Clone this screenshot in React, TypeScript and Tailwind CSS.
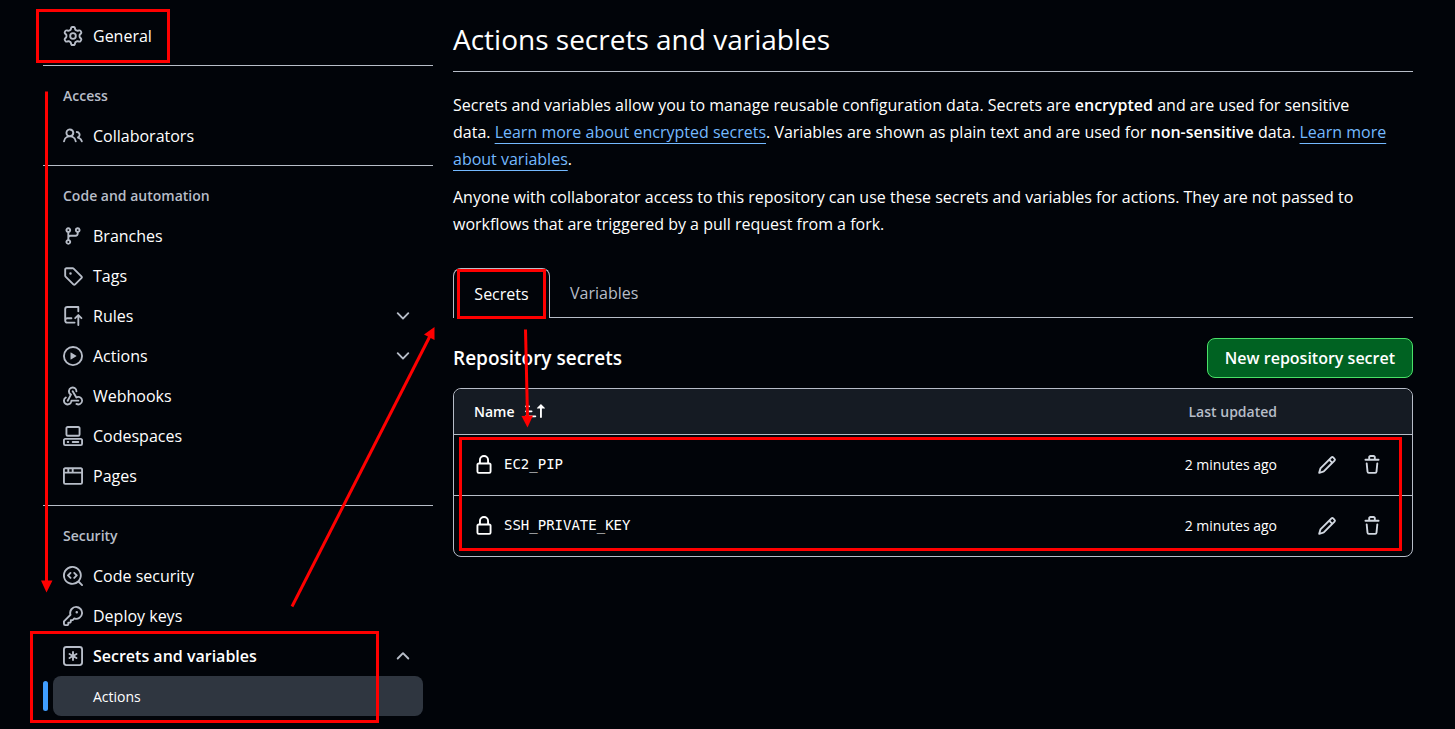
import type { ReactNode } from "react";

/* ----------------------------------------------------------------- Icons */

const ICONS = {
  gear: "M8 0a8.2 8.2 0 0 1 .701.031C9.444.095 9.99.645 10.16 1.29l.288 1.107c.018.066.079.158.212.224.231.114.454.243.668.386.123.082.233.09.299.071l1.103-.303c.644-.176 1.392.021 1.82.63.27.385.506.792.704 1.218.315.675.111 1.422-.364 1.891l-.814.806c-.049.048-.098.147-.088.294.016.257.016.515 0 .772-.01.147.038.246.088.294l.814.806c.475.469.679 1.216.364 1.891a7.977 7.977 0 0 1-.704 1.217c-.428.61-1.176.807-1.82.63l-1.102-.302c-.067-.019-.177-.011-.3.071a5.909 5.909 0 0 1-.668.386c-.133.066-.194.158-.211.224l-.29 1.106c-.168.646-.715 1.196-1.458 1.26a8.006 8.006 0 0 1-1.402 0c-.743-.064-1.289-.614-1.458-1.26l-.289-1.106c-.018-.066-.079-.158-.212-.224a5.738 5.738 0 0 1-.668-.386c-.123-.082-.233-.09-.299-.071l-1.103.303c-.644.176-1.392-.021-1.82-.63a8.12 8.12 0 0 1-.704-1.218c-.315-.675-.111-1.422.363-1.891l.815-.806c.05-.048.098-.147.088-.294a6.214 6.214 0 0 1 0-.772c.01-.147-.038-.246-.088-.294l-.815-.806C.635 6.045.431 5.298.746 4.623a7.92 7.92 0 0 1 .704-1.217c.428-.61 1.176-.807 1.82-.63l1.102.302c.067.019.177.011.3-.071.214-.143.437-.272.668-.386.133-.066.194-.158.211-.224l.29-1.106C6.009.645 6.556.095 7.299.03 7.53.01 7.764 0 8 0Zm-.571 1.525c-.036.003-.108.036-.137.146l-.289 1.105c-.147.561-.549.967-.998 1.189-.173.086-.34.183-.5.29-.417.278-.97.423-1.529.27l-1.103-.303c-.109-.03-.175.016-.195.045-.22.312-.412.644-.573.99-.014.031-.021.11.059.19l.815.806c.411.406.562.957.53 1.456a4.709 4.709 0 0 0 0 .582c.032.499-.119 1.05-.53 1.456l-.815.806c-.081.08-.073.159-.059.19.162.346.353.677.573.989.02.03.085.076.195.046l1.102-.303c.56-.153 1.113-.008 1.53.27.161.107.328.204.501.29.447.222.85.629.997 1.189l.289 1.105c.029.109.101.143.137.146a6.6 6.6 0 0 0 1.142 0c.036-.003.108-.036.137-.146l.289-1.105c.147-.561.549-.967.998-1.189.173-.086.34-.183.5-.29.417-.278.97-.423 1.529-.27l1.103.303c.109.029.175-.016.195-.045.22-.313.411-.644.573-.99.014-.031.021-.11-.059-.19l-.815-.806c-.411-.406-.562-.957-.53-1.456a4.709 4.709 0 0 0 0-.582c-.032-.499.119-1.05.53-1.456l.815-.806c.081-.08.073-.159.059-.19a6.464 6.464 0 0 0-.573-.989c-.02-.03-.085-.076-.195-.046l-1.102.303c-.56.153-1.113.008-1.53-.27a4.44 4.44 0 0 0-.501-.29c-.447-.222-.85-.629-.997-1.189l-.289-1.105c-.029-.11-.101-.143-.137-.146a6.6 6.6 0 0 0-1.142 0ZM11 8a3 3 0 1 1-6 0 3 3 0 0 1 6 0ZM9.5 8a1.5 1.5 0 1 0-3.001.001A1.5 1.5 0 0 0 9.5 8Z",
  people:
    "M2 5.5a3.5 3.5 0 1 1 5.898 2.549 5.508 5.508 0 0 1 3.034 4.084.75.75 0 1 1-1.482.235 4 4 0 0 0-7.9 0 .75.75 0 0 1-1.482-.236A5.507 5.507 0 0 1 3.102 8.05 3.493 3.493 0 0 1 2 5.5ZM11 4a3.001 3.001 0 0 1 2.22 5.018 5.01 5.01 0 0 1 2.56 3.012.749.749 0 0 1-.885.954.752.752 0 0 1-.549-.514 3.507 3.507 0 0 0-2.522-2.372.75.75 0 0 1-.574-.73v-.352a.75.75 0 0 1 .416-.672A1.5 1.5 0 0 0 11 5.5.75.75 0 0 1 11 4Zm-5.5-.5a2 2 0 1 0-.001 3.999A2 2 0 0 0 5.5 3.5Z",
  branch:
    "M9.5 3.25a2.25 2.25 0 1 1 3 2.122V6A2.5 2.5 0 0 1 10 8.5H6a1 1 0 0 0-1 1v1.128a2.251 2.251 0 1 1-1.5 0V5.372a2.25 2.25 0 1 1 1.5 0v1.836A2.493 2.493 0 0 1 6 7h4a1 1 0 0 0 1-1v-.628A2.25 2.25 0 0 1 9.5 3.25Zm-6 0a.75.75 0 1 0 1.5 0 .75.75 0 0 0-1.5 0Zm8.25-.75a.75.75 0 1 0 0 1.5.75.75 0 0 0 0-1.5ZM4.25 12a.75.75 0 1 0 0 1.5.75.75 0 0 0 0-1.5Z",
  tag: "M1 7.775V2.75C1 1.784 1.784 1 2.75 1h5.025c.464 0 .91.184 1.238.513l6.25 6.25a1.75 1.75 0 0 1 0 2.474l-5.026 5.026a1.75 1.75 0 0 1-2.474 0l-6.25-6.25A1.752 1.752 0 0 1 1 7.775Zm1.5 0c0 .066.026.13.073.177l6.25 6.25a.25.25 0 0 0 .354 0l5.025-5.025a.25.25 0 0 0 0-.354l-6.25-6.25a.25.25 0 0 0-.177-.073H2.75a.25.25 0 0 0-.25.25ZM6 5a1 1 0 1 1 0 2 1 1 0 0 1 0-2Z",
  repoPush:
    "M1 2.5A2.5 2.5 0 0 1 3.5 0h8.75a.75.75 0 0 1 .75.75v3.5a.75.75 0 0 1-1.5 0V1.5h-8a1 1 0 0 0-1 1v6.708A2.493 2.493 0 0 1 3.5 9h3.25a.75.75 0 0 1 0 1.5H3.5a1 1 0 0 0 0 2h5.75a.75.75 0 0 1 0 1.5H3.5A2.5 2.5 0 0 1 1 11.5Zm13.23 7.79-.001-.001-1.224-1.224v6.184a.75.75 0 0 1-1.5 0V9.066L10.28 10.29a.75.75 0 0 1-1.06-1.061l2.505-2.504a.75.75 0 0 1 1.06 0L15.29 9.23a.751.751 0 0 1-.018 1.042.751.751 0 0 1-1.042.018Z",
  play: "M8 0a8 8 0 1 1 0 16A8 8 0 0 1 8 0ZM1.5 8a6.5 6.5 0 1 0 13 0 6.5 6.5 0 0 0-13 0Zm4.879-2.773 4.264 2.559a.25.25 0 0 1 0 .428l-4.264 2.559A.25.25 0 0 1 6 10.559V5.442a.25.25 0 0 1 .379-.215Z",
  webhook:
    "M5.5 4.25a2.25 2.25 0 0 1 4.5 0 .75.75 0 0 0 1.5 0 3.75 3.75 0 1 0-6.14 2.889l-2.272 4.258a.75.75 0 0 0 1.324.706L7 7.25a.75.75 0 0 0-.309-1.015A2.25 2.25 0 0 1 5.5 4.25ZM7.364 3.607a.75.75 0 0 1 1.03.257l2.608 4.349a3.75 3.75 0 1 1-.628 6.785.75.75 0 0 1 .752-1.299 2.25 2.25 0 1 0-.033-3.88.75.75 0 0 1-1.03-.256L7.107 4.636a.75.75 0 0 1 .257-1.03ZM2.9 8.776A.75.75 0 0 1 2.625 9.8 2.25 2.25 0 1 0 6 11.75a.75.75 0 0 1 .75-.751h5.5a.75.75 0 0 1 0 1.5H7.425a3.751 3.751 0 1 1-5.55-3.998.75.75 0 0 1 1.024.274Z",
  codespaces:
    "M0 11.25c0-.966.784-1.75 1.75-1.75h12.5c.966 0 1.75.784 1.75 1.75v3A1.75 1.75 0 0 1 14.25 16H1.75A1.75 1.75 0 0 1 0 14.25Zm2-9.5C2 .784 2.784 0 3.75 0h8.5C13.216 0 14 .784 14 1.75v5a1.75 1.75 0 0 1-1.75 1.75h-8.5A1.75 1.75 0 0 1 2 6.75Zm1.75-.25a.25.25 0 0 0-.25.25v5c0 .138.112.25.25.25h8.5a.25.25 0 0 0 .25-.25v-5a.25.25 0 0 0-.25-.25Zm-2 9.5a.25.25 0 0 0-.25.25v3c0 .138.112.25.25.25h12.5a.25.25 0 0 0 .25-.25v-3a.25.25 0 0 0-.25-.25ZM7 12.75a.75.75 0 0 1 .75-.75h4.5a.75.75 0 0 1 0 1.5h-4.5a.75.75 0 0 1-.75-.75Zm-4 0a.75.75 0 0 1 .75-.75h.5a.75.75 0 0 1 0 1.5h-.5a.75.75 0 0 1-.75-.75Z",
  browser:
    "M0 2.75C0 1.784.784 1 1.75 1h12.5c.966 0 1.75.784 1.75 1.75v10.5A1.75 1.75 0 0 1 14.25 15H1.75A1.75 1.75 0 0 1 0 13.25ZM14.5 6h-13v7.25c0 .138.112.25.25.25h12.5a.25.25 0 0 0 .25-.25Zm-6-3.5v2h6V2.75a.25.25 0 0 0-.25-.25ZM5 2.5v2h2v-2Zm-3.25 0a.25.25 0 0 0-.25.25V4.5h2v-2Z",
  codescan:
    "M8.47 4.97a.75.75 0 0 0 0 1.06L9.94 7.5 8.47 8.97a.75.75 0 1 0 1.06 1.06l2-2a.75.75 0 0 0 0-1.06l-2-2a.75.75 0 0 0-1.06 0ZM6.53 6.03a.75.75 0 0 0-1.06-1.06l-2 2a.75.75 0 0 0 0 1.06l2 2a.75.75 0 1 0 1.06-1.06L5.06 7.5l1.47-1.47ZM12.246 13.307a7.501 7.501 0 1 1 1.06-1.06l2.474 2.473a.749.749 0 0 1-.326 1.275.749.749 0 0 1-.734-.215ZM1.5 7.5a6.002 6.002 0 0 0 3.608 5.504 6.002 6.002 0 0 0 6.486-1.117.748.748 0 0 1 .292-.293A6 6 0 1 0 1.5 7.5Z",
  key: "M10.5 0a5.499 5.499 0 1 1-1.288 10.848l-.932.932a.749.749 0 0 1-.53.22H7v.75a.749.749 0 0 1-.22.53l-.5.5a.749.749 0 0 1-.53.22H5v.75a.749.749 0 0 1-.22.53l-.5.5a.749.749 0 0 1-.53.22h-2A1.75 1.75 0 0 1 0 14.25v-2c0-.199.079-.389.22-.53l4.932-4.932A5.5 5.5 0 0 1 10.5 0Zm-4 5.5c-.001.431.069.86.205 1.269a.75.75 0 0 1-.181.768L1.5 12.56v1.69c0 .138.112.25.25.25h1.69l.06-.06v-1.19a.75.75 0 0 1 .75-.75h1.19l.06-.06v-1.19a.75.75 0 0 1 .75-.75h1.19l1.023-1.025a.75.75 0 0 1 .768-.18A4 4 0 1 0 6.5 5.5ZM11 6a1 1 0 1 1 0-2 1 1 0 0 1 0 2Z",
  asterisk:
    "M0 2.75A2.75 2.75 0 0 1 2.75 0h10.5A2.75 2.75 0 0 1 16 2.75v10.5A2.75 2.75 0 0 1 13.25 16H2.75A2.75 2.75 0 0 1 0 13.25ZM2.75 1.5c-.69 0-1.25.56-1.25 1.25v10.5c0 .69.56 1.25 1.25 1.25h10.5c.69 0 1.25-.56 1.25-1.25V2.75c0-.69-.56-1.25-1.25-1.25ZM8 4a.75.75 0 0 1 .75.75V6.7l1.69-.975a.75.75 0 0 1 .75 1.3L9.5 8l1.69.976a.75.75 0 0 1-.75 1.298L8.75 9.3v1.951a.75.75 0 0 1-1.5 0V9.299l-1.69.976a.75.75 0 0 1-.75-1.3L6.5 8l-1.69-.975a.75.75 0 0 1 .75-1.3l1.69.976V4.75A.75.75 0 0 1 8 4Z",
  chevronDown:
    "M12.78 5.22a.749.749 0 0 1 0 1.06l-4.25 4.25a.749.749 0 0 1-1.06 0L3.22 6.28a.749.749 0 1 1 1.06-1.06L8 8.939l3.72-3.719a.749.749 0 0 1 1.06 0Z",
  chevronUp:
    "M3.22 10.53a.749.749 0 0 1 0-1.06l4.25-4.25a.749.749 0 0 1 1.06 0l4.25 4.25a.749.749 0 1 1-1.06 1.06L8 6.811 4.28 10.53a.749.749 0 0 1-1.06 0Z",
  sortAsc:
    "m12.927 2.573 3 3A.25.25 0 0 1 15.75 6H13.5v6.75a.75.75 0 0 1-1.5 0V6H9.75a.25.25 0 0 1-.177-.427l3-3a.25.25 0 0 1 .354 0ZM0 12.25a.75.75 0 0 1 .75-.75h7.5a.75.75 0 0 1 0 1.5H.75a.75.75 0 0 1-.75-.75Zm0-4a.75.75 0 0 1 .75-.75h4.5a.75.75 0 0 1 0 1.5H.75a.75.75 0 0 1-.75-.75Zm0-4a.75.75 0 0 1 .75-.75h2.5a.75.75 0 0 1 0 1.5H.75a.75.75 0 0 1-.75-.75Z",
  lock: "M4 4a4 4 0 0 1 8 0v2h.25c.966 0 1.75.784 1.75 1.75v5.5A1.75 1.75 0 0 1 12.25 15h-8.5A1.75 1.75 0 0 1 2 13.25v-5.5C2 6.784 2.784 6 3.75 6H4Zm8.25 3.5h-8.5a.25.25 0 0 0-.25.25v5.5c0 .138.112.25.25.25h8.5a.25.25 0 0 0 .25-.25v-5.5a.25.25 0 0 0-.25-.25ZM10.5 6V4a2.5 2.5 0 1 0-5 0v2Z",
  pencil:
    "M11.013 1.427a1.75 1.75 0 0 1 2.474 0l1.086 1.086a1.75 1.75 0 0 1 0 2.474l-8.61 8.61c-.21.21-.47.364-.756.445l-3.251.93a.75.75 0 0 1-.927-.928l.929-3.25c.081-.286.235-.547.445-.758l8.61-8.61Zm.176 4.823L9.75 4.81l-6.286 6.287a.253.253 0 0 0-.064.108l-.558 1.953 1.953-.558a.253.253 0 0 0 .108-.064Zm1.238-3.763a.25.25 0 0 0-.354 0L10.811 3.75l1.439 1.44 1.263-1.263a.25.25 0 0 0 0-.354Z",
  trash:
    "M11 1.75V3h2.25a.75.75 0 0 1 0 1.5H2.75a.75.75 0 0 1 0-1.5H5V1.75C5 .784 5.784 0 6.75 0h2.5C10.216 0 11 .784 11 1.75ZM4.496 6.675l.66 6.6a.25.25 0 0 0 .249.225h5.19a.25.25 0 0 0 .249-.225l.66-6.6a.75.75 0 0 1 1.492.149l-.66 6.6A1.748 1.748 0 0 1 10.595 15h-5.19a1.75 1.75 0 0 1-1.741-1.575l-.66-6.6a.75.75 0 1 1 1.492-.15ZM6.5 1.75V3h3V1.75a.25.25 0 0 0-.25-.25h-2.5a.25.25 0 0 0-.25.25Z",
};

type IconName = keyof typeof ICONS;

function Icon({ name, className = "" }: { name: IconName; className?: string }) {
  return (
    <svg
      viewBox="0 0 16 16"
      fill="currentColor"
      aria-hidden="true"
      className={`h-5 w-5 flex-none ${className}`}
    >
      <path d={ICONS[name]} />
    </svg>
  );
}

/* ----------------------------------------------------------- Annotations */

function Highlight({ className }: { className: string }) {
  return (
    <span
      className={`pointer-events-none absolute z-10 border-3 border-[#ff0000] ${className}`}
    />
  );
}

function Arrows() {
  return (
    <svg
      width="600"
      height="640"
      viewBox="0 0 600 640"
      aria-hidden="true"
      className="pointer-events-none absolute left-0 top-0 z-10"
    >
      <g fill="#ff0000" stroke="#ff0000">
        <path d="M46.5 91.5V582" strokeWidth="3" />
        <path d="M41 580.5h11.5L46.5 592.5Z" stroke="none" />
        <path d="M292 606.5 430 336" strokeWidth="3" />
        <path d="M434.5 327 424 334.5 434.5 340Z" stroke="none" />
        <path d="M525.5 329.5 527.5 417" strokeWidth="3" />
        <path d="M521.5 416 533 415.5 527.5 427.5Z" stroke="none" />
      </g>
    </svg>
  );
}

/* --------------------------------------------------------------- Sidebar */

const ITEM =
  "relative mx-[10px] flex h-10 items-center gap-[10px] rounded-md px-[10px] text-left text-[16px] hover:bg-[#2f3640]";

function NavLink({
  icon,
  children,
}: {
  icon: IconName;
  children: ReactNode;
}) {
  return (
    <a href="#" className={ITEM}>
      <Icon name={icon} className="text-[#b7bdc8]" />
      {children}
    </a>
  );
}

function NavGroup({
  icon,
  label,
  open = false,
}: {
  icon: IconName;
  label: string;
  open?: boolean;
}) {
  return (
    <button
      type="button"
      aria-expanded={open}
      className={`${ITEM} ${open ? "font-semibold" : ""}`}
    >
      <Icon name={icon} className="text-[#b7bdc8]" />
      <span className="flex-1">{label}</span>
      <Icon
        name={open ? "chevronUp" : "chevronDown"}
        className="text-[#b7bdc8]"
      />
    </button>
  );
}

function NavSection({
  title,
  children,
}: {
  title: string;
  children: ReactNode;
}) {
  return (
    <section className="mt-[9px] flex flex-col border-t border-[#b7bdc8]">
      <h2 className="mt-[19px] mb-[9px] px-5 text-[14px] leading-[22px] font-semibold text-[#b7bdc8]">
        {title}
      </h2>
      {children}
    </section>
  );
}

function Sidebar() {
  return (
    <nav aria-label="Settings" className="w-[390px] flex-none">
      <div className="relative">
        <NavLink icon="gear">General</NavLink>
        <Highlight className="-top-[7px] -left-[7px] h-[54px] w-[134px]" />
      </div>

      <NavSection title="Access">
        <NavLink icon="people">Collaborators</NavLink>
      </NavSection>

      <NavSection title="Code and automation">
        <NavLink icon="branch">Branches</NavLink>
        <NavLink icon="tag">Tags</NavLink>
        <NavGroup icon="repoPush" label="Rules" />
        <NavGroup icon="play" label="Actions" />
        <NavLink icon="webhook">Webhooks</NavLink>
        <NavLink icon="codespaces">Codespaces</NavLink>
        <NavLink icon="browser">Pages</NavLink>
      </NavSection>

      <NavSection title="Security">
        <NavLink icon="codescan">Code security</NavLink>
        <NavLink icon="key">Deploy keys</NavLink>
        <div className="relative flex flex-col">
          <NavGroup icon="asterisk" label="Secrets and variables" open />
          <a
            href="#"
            aria-current="page"
            className="relative mx-[10px] flex h-10 items-center rounded-lg bg-[#2f3640] pl-10 text-[14px]"
          >
            <span className="absolute top-[5px] -left-[10px] h-[30px] w-[5px] rounded-full bg-[#409eff]" />
            Actions
          </a>
          <Highlight className="-top-[5px] -left-[13px] h-[92px] w-[349px]" />
        </div>
      </NavSection>
    </nav>
  );
}

/* --------------------------------------------------------------- Secrets */

const SECRETS = [
  { name: "EC2_PIP", updated: "2 minutes ago" },
  { name: "SSH_PRIVATE_KEY", updated: "2 minutes ago" },
];

function TextLink({ children }: { children: ReactNode }) {
  return (
    <a
      href="#"
      className="text-[#74b9ff] underline decoration-1 underline-offset-[5px] [text-decoration-skip-ink:none]"
    >
      {children}
    </a>
  );
}

function SecretsTable() {
  return (
    <div className="relative mt-[10px] rounded-lg border border-[#b7bdc8]">
      <table className="w-full text-[14px]">
        <thead>
          <tr className="h-[45px] border-b border-[#b7bdc8] bg-[#151b23]">
            <th className="rounded-tl-lg pl-5 text-left font-semibold">
              <button type="button" className="flex items-center gap-[10px]">
                Name
                <Icon name="sortAsc" />
              </button>
            </th>
            <th className="w-[180px] text-right font-semibold text-[#b7bdc8]">
              Last updated
            </th>
            <th aria-label="Manage" className="w-[135px] rounded-tr-lg" />
          </tr>
        </thead>
        <tbody>
          {SECRETS.map((s) => (
            <tr
              key={s.name}
              className="h-[61px] border-b border-[#b7bdc8] last:border-b-0"
            >
              <td className="pl-5">
                <div className="flex items-center gap-[10px]">
                  <Icon name="lock" />
                  <code className="font-['DejaVu_Sans_Mono',monospace] text-[14px]">
                    {s.name}
                  </code>
                </div>
              </td>
              <td className="text-right">{s.updated}</td>
              <td>
                <div className="flex items-center justify-end gap-[25px] pr-[30px] text-[#d1d7e0]">
                  <button type="button" aria-label={`Edit ${s.name}`}>
                    <Icon name="pencil" />
                  </button>
                  <button type="button" aria-label={`Delete ${s.name}`}>
                    <Icon name="trash" />
                  </button>
                </div>
              </td>
            </tr>
          ))}
        </tbody>
      </table>
      <Highlight className="top-12 right-[10px] bottom-[5px] left-[5px]" />
    </div>
  );
}

function Tabs() {
  return (
    <div className="mt-[30px] flex h-[50px] text-[16px]">
      <a
        href="#"
        aria-current="page"
        className="relative flex w-[97px] items-center justify-center rounded-t-lg border border-b-0 border-[#b7bdc8]"
      >
        Secrets
        <Highlight className="top-0 -bottom-px left-[3px] right-[3px]" />
      </a>
      <div className="flex flex-1 border-b border-[#b7bdc8]">
        <a href="#" className="flex items-center px-5 text-[#b7bdc8]">
          Variables
        </a>
      </div>
    </div>
  );
}

export default function App() {
  return (
    <div className="relative flex min-h-screen gap-5 bg-[#010409] pt-4 pr-[42px] pb-3 pl-[43px] font-['Open_Sans','Noto_Sans',sans-serif] text-white">
      <Sidebar />
      <main className="min-w-0 flex-1">
        <h1 className="border-b border-[#b7bdc8] pb-2 text-[28px] leading-[47px]">
          Actions secrets and variables
        </h1>
        <div className="mt-5 pr-6 text-[16px] leading-[27px]">
          <p>
            Secrets and variables allow you to manage reusable configuration
            data. Secrets are <strong className="font-semibold">encrypted</strong>{" "}
            and are used for sensitive data.{" "}
            <TextLink>Learn more about encrypted secrets</TextLink>. Variables
            are shown as plain text and are used for{" "}
            <strong className="font-semibold">non-sensitive</strong> data.{" "}
            <TextLink>Learn more about variables</TextLink>.
          </p>
          <p className="mt-[11px]">
            Anyone with collaborator access to this repository can use these
            secrets and variables for actions. They are not passed to workflows
            that are triggered by a pull request from a fork.
          </p>
        </div>

        <Tabs />

        <div className="mt-5 flex items-center justify-between">
          <h2 className="text-[19px] font-semibold">Repository secrets</h2>
          <button
            type="button"
            className="h-10 rounded-lg border border-[#4ae168] bg-[#006222] px-[17px] text-[16px] font-semibold hover:bg-[#00782a]"
          >
            New repository secret
          </button>
        </div>
        <SecretsTable />
      </main>
      <Arrows />
    </div>
  );
}
